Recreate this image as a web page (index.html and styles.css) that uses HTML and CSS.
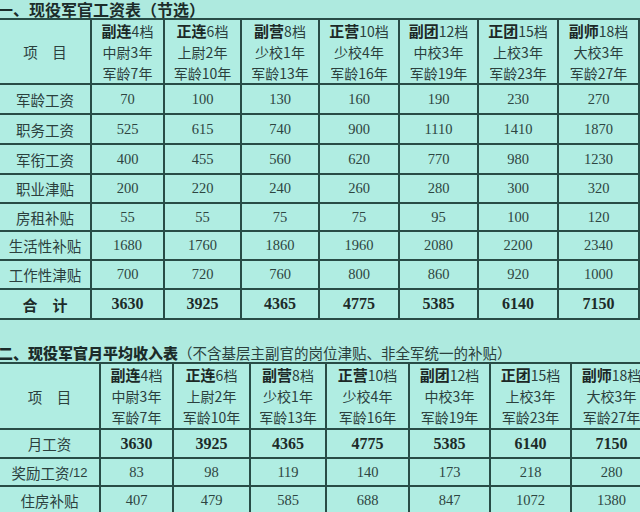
FILE: index.html
```html
<!DOCTYPE html>
<html lang="zh-CN">
<head>
<meta charset="utf-8">
<title>现役军官工资表</title>
<link rel="stylesheet" href="styles.css">
</head>
<body>
<div class="title t1title">一<span class="p">、</span>现役军官工资表<span class="p">（</span>节选<span class="p">）</span></div>
<div class="tbl t1">
  <div class="c lbl">项　目</div>
  <div class="c h"><span><b>副连</b>4档</span><span>中尉3年</span><span>军龄7年</span></div>
  <div class="c h"><span><b>正连</b>6档</span><span>上尉2年</span><span>军龄10年</span></div>
  <div class="c h"><span><b>副营</b>8档</span><span>少校1年</span><span>军龄13年</span></div>
  <div class="c h"><span><b>正营</b>10档</span><span>少校4年</span><span>军龄16年</span></div>
  <div class="c h"><span><b>副团</b>12档</span><span>中校3年</span><span>军龄19年</span></div>
  <div class="c h"><span><b>正团</b>15档</span><span>上校3年</span><span>军龄23年</span></div>
  <div class="c h"><span><b>副师</b>18档</span><span>大校3年</span><span>军龄27年</span></div>

  <div class="c lbl">军龄工资</div>
  <div class="c n">70</div><div class="c n">100</div><div class="c n">130</div><div class="c n">160</div><div class="c n">190</div><div class="c n">230</div><div class="c n">270</div>

  <div class="c lbl">职务工资</div>
  <div class="c n">525</div><div class="c n">615</div><div class="c n">740</div><div class="c n">900</div><div class="c n">1110</div><div class="c n">1410</div><div class="c n">1870</div>

  <div class="c lbl">军衔工资</div>
  <div class="c n">400</div><div class="c n">455</div><div class="c n">560</div><div class="c n">620</div><div class="c n">770</div><div class="c n">980</div><div class="c n">1230</div>

  <div class="c lbl">职业津贴</div>
  <div class="c n">200</div><div class="c n">220</div><div class="c n">240</div><div class="c n">260</div><div class="c n">280</div><div class="c n">300</div><div class="c n">320</div>

  <div class="c lbl">房租补贴</div>
  <div class="c n">55</div><div class="c n">55</div><div class="c n">75</div><div class="c n">75</div><div class="c n">95</div><div class="c n">100</div><div class="c n">120</div>

  <div class="c lbl">生活性补贴</div>
  <div class="c n">1680</div><div class="c n">1760</div><div class="c n">1860</div><div class="c n">1960</div><div class="c n">2080</div><div class="c n">2200</div><div class="c n">2340</div>

  <div class="c lbl">工作性津贴</div>
  <div class="c n">700</div><div class="c n">720</div><div class="c n">760</div><div class="c n">800</div><div class="c n">860</div><div class="c n">920</div><div class="c n">1000</div>

  <div class="c lbl strong">合　计</div>
  <div class="c n tot">3630</div><div class="c n tot">3925</div><div class="c n tot">4365</div><div class="c n tot">4775</div><div class="c n tot">5385</div><div class="c n tot">6140</div><div class="c n tot">7150</div>
</div>

<div class="title t2title"><b>二<span class="p">、</span>现役军官月平均收入表</b><span class="note"><span class="p">（</span>不含基层主副官的岗位津贴<span class="p">、</span>非全军统一的补贴<span class="p">）</span></span></div>
<div class="tbl t2">
  <div class="c lbl">项　目</div>
  <div class="c h"><span><b>副连</b>4档</span><span>中尉3年</span><span>军龄7年</span></div>
  <div class="c h"><span><b>正连</b>6档</span><span>上尉2年</span><span>军龄10年</span></div>
  <div class="c h"><span><b>副营</b>8档</span><span>少校1年</span><span>军龄13年</span></div>
  <div class="c h"><span><b>正营</b>10档</span><span>少校4年</span><span>军龄16年</span></div>
  <div class="c h"><span><b>副团</b>12档</span><span>中校3年</span><span>军龄19年</span></div>
  <div class="c h"><span><b>正团</b>15档</span><span>上校3年</span><span>军龄23年</span></div>
  <div class="c h"><span><b>副师</b>18档</span><span>大校3年</span><span>军龄27年</span></div>

  <div class="c lbl">月工资</div>
  <div class="c n tot">3630</div><div class="c n tot">3925</div><div class="c n tot">4365</div><div class="c n tot">4775</div><div class="c n tot">5385</div><div class="c n tot">6140</div><div class="c n tot">7150</div>

  <div class="c lbl">奖励工资<span class="sl">/12</span></div>
  <div class="c n">83</div><div class="c n">98</div><div class="c n">119</div><div class="c n">140</div><div class="c n">173</div><div class="c n">218</div><div class="c n">280</div>

  <div class="c lbl">住房补贴</div>
  <div class="c n">407</div><div class="c n">479</div><div class="c n">585</div><div class="c n">688</div><div class="c n">847</div><div class="c n">1072</div><div class="c n">1380</div>
</div>
</body>
</html>
```

FILE: styles.css
```css
html, body {
  margin: 0;
  padding: 0;
  overflow: hidden;
  background: #aeeadf;
  width: 640px;
  height: 512px;
}

body {
  font-family: "Noto Sans CJK SC", sans-serif;
  color: #2b403d;
  text-spacing-trim: space-all;
  font-feature-settings: "chws" 0, "halt" 0, "palt" 0;
}

.title {
  height: 18px;
  line-height: 18px;
  margin-left: -2px;
  font-size: 15px;
  font-weight: bold;
  color: #1c2c2a;
  white-space: nowrap;
}

.t1title {
  font-size: 16px;
  margin-left: -3px;
}

.title .p {
  display: inline-block;
  width: 1em;
  text-align: center;
}

.t2title {
  margin-top: 24px;
}

.t2title .note {
  font-size: 14.5px;
  font-weight: normal;
  color: #2b403d;
}

.tbl {
  display: grid;
  gap: 2px;
  padding: 2px;
  margin-left: -2px;
  background: #284c46;
  width: max-content;
}

.t1 {
  grid-template-columns: 90px 71px 75px 76px 78px 77px 78px 79px;
  grid-template-rows: 63px 28px 28px 28px 27px 26px 27px 27px 28px;
}

.t2 {
  grid-template-columns: 99px 71px 75px 74px 81px 79px 79px 79px;
  grid-template-rows: 64px 27px 26px 27px;
}

.c {
  background: #b0ede2;
  display: flex;
  flex-direction: column;
  align-items: center;
  justify-content: center;
  white-space: nowrap;
}

.lbl {
  font-size: 14.5px;
  flex-direction: row;
}

.strong {
  font-weight: bold;
  font-size: 15px;
  color: #1c2c2a;
}

.sl {
  font-family: "Liberation Sans", sans-serif;
  font-size: 13px;
}

.h {
  font-size: 14px;
  line-height: 21px;
}

.h b {
  font-size: 15px;
  color: #1c2826;
}

.h span {
  display: block;
}

.n {
  font-family: "Liberation Serif", serif;
  font-size: 14.5px;
  color: #2d4541;
}

.tot {
  font-weight: bold;
  font-size: 16px;
  color: #1d2b29;
}
```
